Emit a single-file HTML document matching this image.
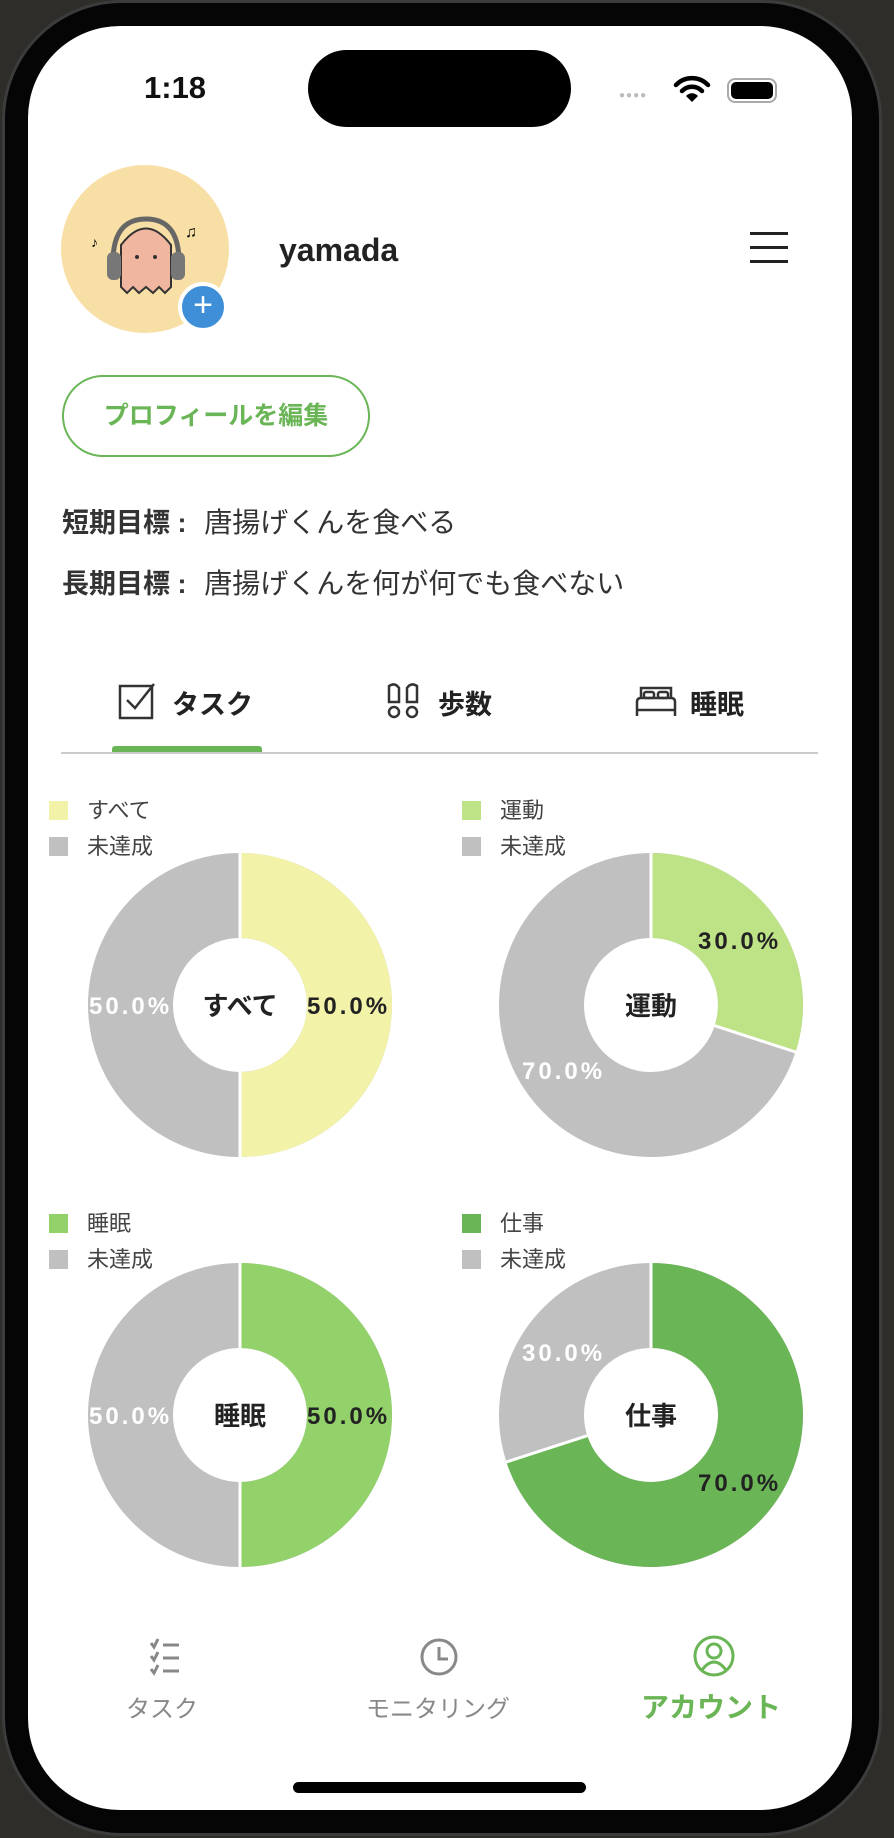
<!DOCTYPE html>
<html><head><meta charset="utf-8"><style>
*{margin:0;padding:0;box-sizing:border-box}
body{width:894px;height:1838px;background:#2e2d29;position:relative;overflow:hidden;font-family:"Liberation Sans","Noto Sans CJK JP",sans-serif}
.phone{position:absolute;left:2px;top:0;width:880px;height:1836px;background:#050505;border-radius:120px;border:3px solid #3c3c3c}
.screen{position:absolute;left:28px;top:26px;width:824px;height:1784px;background:#fff;border-radius:92px;overflow:hidden}
.a{position:absolute;white-space:nowrap}
.p{font-size:24px;font-weight:bold;letter-spacing:3px}
</style></head><body>
<div class="phone"></div>
<div class="screen">
 <div class="a" style="left:116px;top:44px;font-size:31px;font-weight:bold;color:#111">1:18</div>
 <div class="a" style="left:280px;top:24px;width:263px;height:77px;background:#000;border-radius:39px"></div>
 <div class="a" style="left:591px;top:64px;font-size:10px;letter-spacing:1px;color:#bbb">●●●●</div>
 <svg class="a" style="left:645px;top:48px" width="38" height="30" viewBox="0 0 38 30"><path d="M3 11 A22 22 0 0 1 35 11" stroke="#000" stroke-width="4.5" fill="none" stroke-linecap="round"/><path d="M9 17 A14 14 0 0 1 29 17" stroke="#000" stroke-width="4.5" fill="none" stroke-linecap="round"/><path d="M19 28 L13 22 A8 8 0 0 1 25 22 Z" fill="#000"/></svg>
 <div class="a" style="left:699px;top:52px;width:50px;height:25px;border:2.5px solid #aaa;border-radius:8px;padding:2px"><div style="width:100%;height:100%;background:#000;border-radius:5px"></div></div>
 <div class="a" style="left:33px;top:139px;width:168px;height:168px;background:#f8dfa5;border-radius:50%"></div>
 <svg class="a" style="left:63px;top:181px" width="110" height="110" viewBox="0 0 110 110"><path d="M30 80 L30 38 Q55 5 80 38 L80 80 L74 86 L68 80 L62 86 L55 80 L48 86 L42 80 L36 86 Z" fill="#f0b6a0" stroke="#333" stroke-width="2"/><path d="M22 55 Q22 12 55 12 Q88 12 88 55" stroke="#666" stroke-width="5" fill="none"/><rect x="16" y="45" width="14" height="28" rx="6" fill="#777"/><rect x="80" y="45" width="14" height="28" rx="6" fill="#777"/><circle cx="46" cy="50" r="2" fill="#333"/><circle cx="64" cy="50" r="2" fill="#333"/><text x="94" y="30" font-size="16">♫</text><text x="0" y="40" font-size="14">♪</text></svg>
 <div class="a" style="left:150px;top:256px;width:50px;height:50px;background:#3f8fd8;border:4px solid #fff;border-radius:50%;color:#fff;font-size:34px;line-height:38px;text-align:center;font-weight:300">+</div>
 <div class="a" style="left:251px;top:206px;font-size:32px;font-weight:bold;color:#222">yamada</div>
 <div class="a" style="left:722px;top:206px;width:38px;height:3px;background:#222;box-shadow:0 14px 0 #222,0 28px 0 #222"></div>
 <div class="a" style="left:34px;top:349px;width:308px;height:82px;border:2px solid #6ab556;border-radius:41px;color:#6ab556;font-size:25px;font-weight:bold;line-height:78px;text-align:center">プロフィールを編集</div>
 <div class="a" style="left:34px;top:475px;font-size:28px;color:#333"><b style="font-size:27px;margin-right:10px">短期目標 :</b> 唐揚げくんを食べる</div>
 <div class="a" style="left:34px;top:536px;font-size:28px;color:#333"><b style="font-size:27px;margin-right:10px">長期目標 :</b> 唐揚げくんを何が何でも食べない</div>
 <svg class="a" style="left:90px;top:656px" width="38" height="38" viewBox="0 0 38 38"><rect x="2" y="4" width="32" height="32" fill="none" stroke="#333" stroke-width="2.5"/><path d="M9 18 L17 26 L36 2" stroke="#333" stroke-width="2.5" fill="none"/></svg>
 <div class="a" style="left:144px;top:657px;font-size:27px;font-weight:bold;color:#222">タスク</div>
 <svg class="a" style="left:356px;top:656px" width="38" height="38" viewBox="0 0 38 38"><g fill="none" stroke="#333" stroke-width="2.5"><path d="M5 4 Q11 0 15 6 L15 20 L5 20 Z"/><path d="M23 6 Q27 0 33 4 L33 20 L23 20 Z"/><rect x="5" y="25" width="10" height="10" rx="5"/><rect x="23" y="25" width="10" height="10" rx="5"/></g></svg>
 <div class="a" style="left:410px;top:657px;font-size:27px;font-weight:bold;color:#222">歩数</div>
 <svg class="a" style="left:606px;top:658px" width="44" height="36" viewBox="0 0 44 36"><g fill="none" stroke="#333" stroke-width="2.5"><path d="M3 32 L3 18 Q3 14 7 14 L37 14 Q41 14 41 18 L41 32 M3 26 L41 26"/><path d="M7 14 L7 4 L37 4 L37 14"/><rect x="10" y="8" width="10" height="6" rx="2"/><rect x="24" y="8" width="10" height="6" rx="2"/></g></svg>
 <div class="a" style="left:662px;top:657px;font-size:27px;font-weight:bold;color:#222">睡眠</div>
 <div class="a" style="left:33px;top:726px;width:757px;height:2px;background:#ccc"></div>
 <div class="a" style="left:84px;top:720px;width:150px;height:6px;background:#6ab556;border-radius:3px 3px 0 0"></div>
 <div class="a" style="left:21px;top:767px;font-size:22px;color:#444;line-height:36px"><div><span style="display:inline-block;width:19px;height:19px;background:#f2f2a8;margin-right:19px;vertical-align:-2px"></span>すべて</div><div><span style="display:inline-block;width:19px;height:19px;background:#c0c0c0;margin-right:19px;vertical-align:-2px"></span>未達成</div></div>
 <div class="a" style="left:434px;top:767px;font-size:22px;color:#444;line-height:36px"><div><span style="display:inline-block;width:19px;height:19px;background:#bde386;margin-right:19px;vertical-align:-2px"></span>運動</div><div><span style="display:inline-block;width:19px;height:19px;background:#c0c0c0;margin-right:19px;vertical-align:-2px"></span>未達成</div></div>
 <div class="a" style="left:21px;top:1180px;font-size:22px;color:#444;line-height:36px"><div><span style="display:inline-block;width:19px;height:19px;background:#93d16a;margin-right:19px;vertical-align:-2px"></span>睡眠</div><div><span style="display:inline-block;width:19px;height:19px;background:#c0c0c0;margin-right:19px;vertical-align:-2px"></span>未達成</div></div>
 <div class="a" style="left:434px;top:1180px;font-size:22px;color:#444;line-height:36px"><div><span style="display:inline-block;width:19px;height:19px;background:#6ab556;margin-right:19px;vertical-align:-2px"></span>仕事</div><div><span style="display:inline-block;width:19px;height:19px;background:#c0c0c0;margin-right:19px;vertical-align:-2px"></span>未達成</div></div>
 <svg class="a" style="left:0;top:0" width="824" height="1784" font-family="Liberation Sans,Noto Sans CJK JP,sans-serif">
  <g transform="translate(212,979)">
   <circle r="109.5" fill="none" stroke="#c0c0c0" stroke-width="85"/>
   <path d="M0,-152 A152 152 0 0 1 0,152 L0,67 A67 67 0 0 0 0,-67 Z" fill="#f2f2a8"/>
   <path d="M0,-152 L0,-67 M0,67 L0,152" stroke="#fff" stroke-width="3"/>
   <text x="0" y="10" text-anchor="middle" font-size="26" font-weight="bold" fill="#222">すべて</text>
   <text class="p" x="-151" y="9" fill="#fff">50.0%</text>
   <text class="p" x="67" y="9" fill="#222">50.0%</text>
  </g>
  <g transform="translate(623,979)">
   <circle r="109.5" fill="none" stroke="#c0c0c0" stroke-width="85"/>
   <path d="M0,-152 A152 152 0 0 1 144.6,47 L63.7,20.7 A67 67 0 0 0 0,-67 Z" fill="#bde386"/>
   <path d="M0,-152 L0,-67 M63.7,20.7 L144.6,47" stroke="#fff" stroke-width="3"/>
   <text x="0" y="10" text-anchor="middle" font-size="26" font-weight="bold" fill="#222">運動</text>
   <text class="p" x="47" y="-56" fill="#222">30.0%</text>
   <text class="p" x="-129" y="74" fill="#fff">70.0%</text>
  </g>
  <g transform="translate(212,1389)">
   <circle r="109.5" fill="none" stroke="#c0c0c0" stroke-width="85"/>
   <path d="M0,-152 A152 152 0 0 1 0,152 L0,67 A67 67 0 0 0 0,-67 Z" fill="#93d16a"/>
   <path d="M0,-152 L0,-67 M0,67 L0,152" stroke="#fff" stroke-width="3"/>
   <text x="0" y="10" text-anchor="middle" font-size="26" font-weight="bold" fill="#222">睡眠</text>
   <text class="p" x="-151" y="9" fill="#fff">50.0%</text>
   <text class="p" x="67" y="9" fill="#222">50.0%</text>
  </g>
  <g transform="translate(623,1389)">
   <circle r="109.5" fill="none" stroke="#c0c0c0" stroke-width="85"/>
   <path d="M0,-152 A152 152 0 1 1 -144.6,47 L-63.7,20.7 A67 67 0 1 0 0,-67 Z" fill="#6ab556"/>
   <path d="M0,-152 L0,-67 M-63.7,20.7 L-144.6,47" stroke="#fff" stroke-width="3"/>
   <text x="0" y="10" text-anchor="middle" font-size="26" font-weight="bold" fill="#222">仕事</text>
   <text class="p" x="-129" y="-54" fill="#fff">30.0%</text>
   <text class="p" x="47" y="76" fill="#222">70.0%</text>
  </g>
  <g transform="translate(137,1631)" stroke="#888" stroke-width="3" fill="none">
   <path d="M-14 -14 l3 4 l4 -8 M-14 -1 l3 4 l4 -8 M-14 12 l3 4 l4 -8"/>
   <path d="M-2 -12 h16 M-2 1 h16 M-2 14 h16"/>
  </g>
  <g transform="translate(411,1631)" fill="none" stroke="#888" stroke-width="3"><circle r="17"/><path d="M0 -10 V2 H9"/></g>
  <g transform="translate(686,1630)" fill="none" stroke="#6ab556" stroke-width="3"><circle r="19"/><circle cx="0" cy="-5" r="7"/><path d="M-12 14 Q0 -2 12 14"/></g>
 </svg>
 <div class="a" style="left:98px;top:1663px;font-size:24px;color:#888">タスク</div>
 <div class="a" style="left:338px;top:1663px;font-size:24px;color:#888">モニタリング</div>
 <div class="a" style="left:613px;top:1660px;font-size:28px;font-weight:bold;color:#6ab556">アカウント</div>
 <div class="a" style="left:265px;top:1756px;width:293px;height:11px;background:#000;border-radius:6px"></div>
</div>
</body></html>
